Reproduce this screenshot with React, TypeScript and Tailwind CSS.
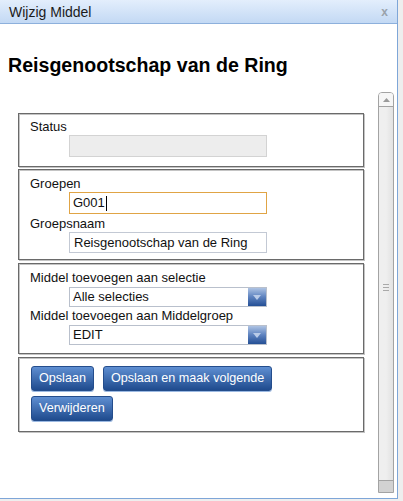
import type { ReactNode } from 'react';

function Section({ children, className = '' }: { children: ReactNode; className?: string }) {
  return (
    <div className={`border border-[#6a6a6a] shadow-[inset_1px_1px_0_#c4c4c4,1px_1px_0_#c4c4c4] pl-[11px] ${className}`}>
      {children}
    </div>
  );
}

function Label({ children }: { children: ReactNode }) {
  return <div className="text-[13px] leading-[16px] text-[#111]">{children}</div>;
}

function SelectBox({ value }: { value: string }) {
  return (
    <div className="ml-[39px] w-[198px] h-[20px] border border-[#b9c0cc] bg-white flex items-center">
      <span className="flex-1 pl-[3px] text-[13px] leading-[16px] text-[#111]">{value}</span>
      <div className="w-[18px] h-[18px] bg-gradient-to-b from-[#aec3e3] via-[#5d82bf] to-[#244f95] flex items-center justify-center">
        <svg width="8" height="5" viewBox="0 0 8 5">
          <path d="M0 0h8L4 5z" fill="#b9cbe8" />
        </svg>
      </div>
    </div>
  );
}

function BlueButton({ children }: { children: ReactNode }) {
  return (
    <button className="h-[25px] px-[7px] rounded-[3px] border border-[#244d8c] bg-gradient-to-b from-[#5f8fd2] to-[#1f4b8e] text-white text-[12.6px] shadow-[0_1px_0_#9bb9e2]">
      {children}
    </button>
  );
}

export default function App() {
  return (
    <div className="w-[403px] h-[501px] bg-[#eeeeee] font-['Liberation_Sans',Arial,sans-serif]">
      <div className="w-[398px] h-[499px] bg-white border-r border-b border-[#7ea6d8] flex flex-col">
        {/* window title bar */}
        <div className="h-[24px] shrink-0 border-b border-[#8db0dc] bg-gradient-to-b from-[#e3eefc] to-[#c3d9f4] flex items-center justify-between pl-[9px] pr-[9px]">
          <span className="text-[14px] leading-[16px] text-[#1b1b1b]">Wijzig Middel</span>
          <span className="text-[12px] font-bold leading-[12px] text-[#9aa2ab]">x</span>
        </div>

        <h1 className="mt-[29px] ml-[8px] text-[19.6px] leading-[24px] font-bold text-black">
          Reisgenootschap van de Ring
        </h1>

        <div className="mt-[15px] h-[401px] flex pl-[18px]">
          <div className="w-[346px] pt-[21px] flex flex-col gap-[2px]">
            <Section className="h-[54px] pt-[5px]">
              <Label>Status</Label>
              <div className="ml-[39px] w-[198px] h-[22px] bg-[#ededed] border border-[#d3d3d3]" />
            </Section>

            <Section className="h-[91px] pt-[6px]">
              <Label>Groepen</Label>
              <div className="ml-[39px] w-[198px] h-[22px] border border-[#e0a445] bg-white flex items-center pl-[3px] text-[13px] text-[#111]">
                G001<span className="w-px h-[15px] bg-black ml-[1px]" />
              </div>
              <div className="mt-[2px]">
                <Label>Groepsnaam</Label>
              </div>
              <div className="ml-[39px] w-[198px] h-[21px] border border-[#c3c9d4] bg-white flex items-center pl-[4px] text-[13px] text-[#111]">
                Reisgenootschap van de Ring
              </div>
            </Section>

            <Section className="h-[91px] pt-[6px] mt-[1px]">
              <Label>Middel toevoegen aan selectie</Label>
              <div className="mt-[1px]">
                <SelectBox value="Alle selecties" />
              </div>
              <div className="mt-[1px]">
                <Label>Middel toevoegen aan Middelgroep</Label>
              </div>
              <div className="mt-[1px]">
                <SelectBox value="EDIT" />
              </div>
            </Section>

            <Section className="h-[75px] pt-[8px] mt-[1px] pl-[12px]">
              <div className="flex gap-[9px]">
                <BlueButton>Opslaan</BlueButton>
                <BlueButton>Opslaan en maak volgende</BlueButton>
              </div>
              <div className="mt-[5px] flex">
                <BlueButton>Verwijderen</BlueButton>
              </div>
            </Section>
          </div>

          {/* vertical scrollbar */}
          <div className="ml-[14px] w-[16px] h-full flex flex-col border border-[#a3a3a3] rounded-t-[4px] overflow-hidden">
            <div className="h-[14px] shrink-0 bg-[#f6f6f6] border-b border-[#a3a3a3] flex items-center justify-center">
              <svg width="7" height="4" viewBox="0 0 7 4">
                <path d="M3.5 0L7 4H0z" fill="#9a9a9a" />
              </svg>
            </div>
            <div className="flex-1 flex bg-gradient-to-r from-[#efefef] via-[#efefef] to-[#e2e2e2] items-center justify-center">
              <div className="flex flex-col gap-[2px] mt-[-12px]">
                <div className="w-[6px] h-px bg-[#a9a9a9]" />
                <div className="w-[6px] h-px bg-[#a9a9a9]" />
                <div className="w-[6px] h-px bg-[#a9a9a9]" />
              </div>
            </div>
            <div className="h-[12px] shrink-0 bg-[#d2d2d2] border-t border-[#a3a3a3]" />
          </div>
        </div>
      </div>
    </div>
  );
}
